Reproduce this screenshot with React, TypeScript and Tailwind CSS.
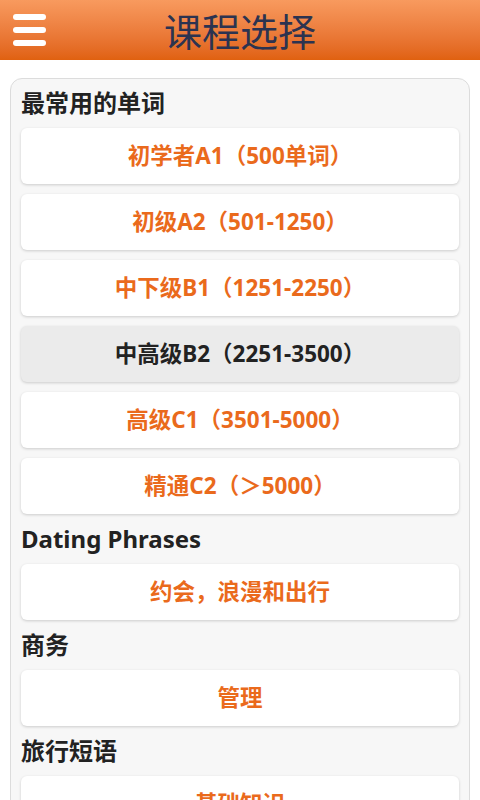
const sections = [
  {
    title: "最常用的单词",
    items: [
      { label: "初学者A1（500单词）" },
      { label: "初级A2（501-1250）" },
      { label: "中下级B1（1251-2250）" },
      { label: "中高级B2（2251-3500）", active: true },
      { label: "高级C1（3501-5000）" },
      { label: "精通C2（＞5000）" },
    ],
  },
  { title: "Dating Phrases", items: [{ label: "约会，浪漫和出行" }] },
  { title: "商务", items: [{ label: "管理" }] },
  { title: "旅行短语", items: [{ label: "基础知识" }] },
]

export default function App() {
  return (
    <div
      className="w-[480px] h-[800px] overflow-hidden bg-white"
      style={{ fontFamily: '"Noto Sans", "Noto Sans CJK SC", sans-serif' }}
    >
      <header className="relative h-[60px] flex items-center justify-center bg-gradient-to-b from-[#f89a5e] to-[#e0610f]">
        <button className="absolute left-[13px] top-[14px] flex flex-col gap-[7px]">
          <span className="block w-[33px] h-[6px] rounded-full bg-white" />
          <span className="block w-[33px] h-[6px] rounded-full bg-white" />
          <span className="block w-[33px] h-[6px] rounded-full bg-white" />
        </button>
        <h1
          className="text-[38px] leading-none text-[#2c3350] font-normal"
          style={{ fontFamily: '"Noto Sans CJK SC", sans-serif' }}
        >
          课程选择
        </h1>
      </header>

      <main className="px-[10px] pt-[18px]">
        <div className="rounded-[12px] border border-[#dcdcdc] bg-[#f7f7f7] px-[10px] pt-[9px] pb-4 flex flex-col gap-[10px]">
          {sections.map((section) => (
            <div key={section.title} className="flex flex-col gap-[10px]">
              <h2 className="h-[30px] flex items-center text-[24px] font-bold text-[#222]">
                {section.title}
              </h2>
              {section.items.map((item) => (
                <button
                  key={item.label}
                  className={`h-[56px] w-full rounded-[6px] text-[22.5px] font-bold shadow-[0_1px_3px_rgba(0,0,0,0.18)] ${
                    item.active ? "bg-[#ebebeb] text-[#222]" : "bg-white text-[#ea6a1c]"
                  }`}
                >
                  {item.label}
                </button>
              ))}
            </div>
          ))}
        </div>
      </main>
    </div>
  )
}
